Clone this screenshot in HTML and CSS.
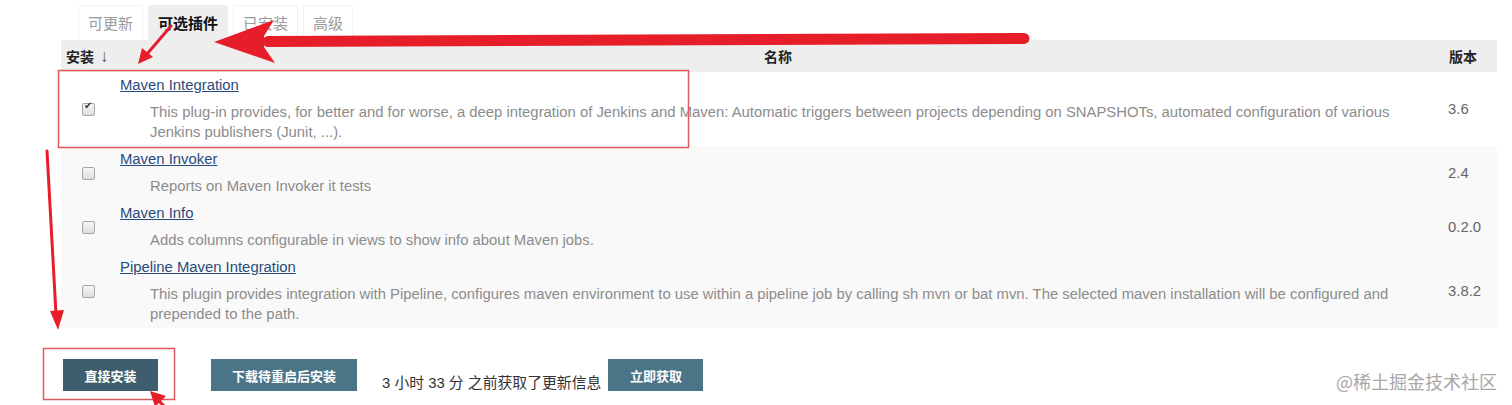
FILE: index.html
```html
<!DOCTYPE html>
<html>
  <head>
    <title>插件管理</title>
    <meta charset="UTF-8">
    <meta name="viewport" content="width=device-width, initial-scale=1.0">

  <!--CSS-->
    <link rel="stylesheet" href="styles.css">
  </head>

<!--BODY-->
<body>

  <!--Tabs-->
  <div class="tabs">
    <div class="tab">可更新</div>
    <div class="tab active">可选插件</div>
    <div class="tab">已安装</div>
    <div class="tab">高级</div>
  </div>

  <!--The plugin table-->
  <table id="plugins">
    <colgroup>
      <col class="c-install">
      <col>
      <col class="c-version">
    </colgroup>
    <thead>
      <tr>
        <th class="col-install">安装 <span class="sort">↓</span></th>
        <th class="col-name">名称</th>
        <th class="col-version">版本</th>
      </tr>
    </thead>
    <tbody>
      <tr class="plain">
        <td class="col-install"><input type="checkbox" checked></td>
        <td class="col-name">
          <a href="#">Maven Integration</a>
          <div class="desc">This plug-in provides, for better and for worse, a deep integration of Jenkins and Maven: Automatic triggers between projects depending on SNAPSHOTs, automated configuration of various Jenkins publishers (Junit, ...).</div>
        </td>
        <td class="col-version">3.6</td>
      </tr>
      <tr>
        <td class="col-install"><input type="checkbox"></td>
        <td class="col-name">
          <a href="#">Maven Invoker</a>
          <div class="desc">Reports on Maven Invoker it tests</div>
        </td>
        <td class="col-version">2.4</td>
      </tr>
      <tr>
        <td class="col-install"><input type="checkbox"></td>
        <td class="col-name">
          <a href="#">Maven Info</a>
          <div class="desc">Adds columns configurable in views to show info about Maven jobs.</div>
        </td>
        <td class="col-version">0.2.0</td>
      </tr>
      <tr>
        <td class="col-install"><input type="checkbox"></td>
        <td class="col-name">
          <a href="#">Pipeline Maven Integration</a>
          <div class="desc">This plugin provides integration with Pipeline, configures maven environment to use within a pipeline job by calling sh mvn or bat mvn. The selected maven installation will be configured and prepended to the path.</div>
        </td>
        <td class="col-version">3.8.2</td>
      </tr>
    </tbody>
  </table>

  <!--Actions-->
  <div class="actions">
    <button class="btn dark">直接安装</button>
    <button class="btn wide">下载待重启后安装</button>
    <span class="info">3 小时 33 分 之前获取了更新信息</span>
    <button class="btn">立即获取</button>
  </div>

  <div class="watermark">@稀土掘金技术社区</div>

  <!--Annotations-->
  <svg class="marks" width="1512" height="405" viewBox="0 0 1512 405">
    <rect x="58.5" y="70.5" width="630" height="77" fill="none" stroke="#e0575d" stroke-width="1.5"/>
    <rect x="43.5" y="348.5" width="131" height="51" fill="none" stroke="#e0575d" stroke-width="1.5"/>
    <line x1="1024" y1="38.5" x2="268" y2="41.5" stroke="#e61e29" stroke-width="11" stroke-linecap="round"/>
    <polygon points="214,42 274,20 264,36 264,47 275,63" fill="#e61e29"/>
    <line x1="171" y1="26" x2="147" y2="54" stroke="#e61e29" stroke-width="3" stroke-linecap="round"/>
    <polygon points="138,64 142,48 153,57" fill="#e61e29"/>
    <line x1="47" y1="151" x2="56" y2="314" stroke="#e61e29" stroke-width="3" stroke-linecap="round"/>
    <polygon points="58,330 50,311 64,310" fill="#e61e29"/>
    <line x1="156" y1="398" x2="168" y2="410" stroke="#e61e29" stroke-width="3"/>
    <polygon points="150,391 166,396 155,407" fill="#e61e29"/>
  </svg>

</body>
</html>
```

FILE: styles.css
```css
html, body {
  margin: 0;
  padding: 0;
  background-color: #fff;
  font-family: "Liberation Sans", Arial, "Noto Sans CJK SC", sans-serif;
  font-size: 14.85px;
  color: #333;
}

body {
  position: relative;
  width: 1512px;
  height: 405px;
  overflow: hidden;
}

/**Tabs*/
.tabs {
  display: flex;
  gap: 5px;
  margin-left: 78px;
  padding-top: 5px;
}

.tab {
  height: 35px;
  line-height: 35px;
  padding: 0 9px;
  font-size: 15px;
  color: #9a9a9a;
  border: 1px solid #f2f2f2;
  border-bottom: none;
  border-radius: 4px 4px 0 0;
  box-sizing: border-box;
}

.tab.active {
  background-color: #eee;
  border-color: #eee;
  color: #111;
  font-weight: bold;
}

/**Table*/
#plugins {
  margin-left: 61px;
  width: 1436px;
  border-collapse: collapse;
  table-layout: fixed;
}

.c-install {
  width: 55px;
}

.c-version {
  width: 57px;
}

#plugins th {
  background-color: #eee;
  height: 32px;
  padding: 0;
  font-size: 14px;
  color: #222;
}

#plugins th.col-install {
  text-align: left;
  padding-left: 5px;
}

#plugins th .sort {
  font-weight: normal;
  font-size: 17px;
  color: #555;
  margin-left: 2px;
}

#plugins th.col-name {
  text-align: center;
}

#plugins th.col-version {
  text-align: left;
  padding-left: 9px;
}

#plugins tbody tr {
  background-color: #f9f9f9;
}

#plugins tbody tr.plain {
  background-color: #fff;
}

#plugins td {
  padding: 3px 0 4px 0;
  line-height: 20px;
  vertical-align: middle;
}

#plugins td.col-install {
  text-align: center;
}

/**Old style grey checkbox*/
#plugins td.col-install input {
  appearance: none;
  -webkit-appearance: none;
  position: relative;
  margin: 0;
  width: 13px;
  height: 13px;
  border: 1px solid #a6a6a6;
  border-radius: 2px;
  background: linear-gradient(#f6f6f6, #dedede);
  vertical-align: middle;
}

#plugins td.col-install input:checked::after {
  content: "✔";
  position: absolute;
  left: 1px;
  top: -4px;
  font-size: 10px;
  color: #333;
}

#plugins td.col-name {
  padding-left: 4px;
  padding-right: 10px;
}

#plugins td.col-version {
  padding-left: 8px;
  color: #666;
}

#plugins a {
  color: #2a4a7c;
  text-decoration: underline;
}

.desc {
  margin-top: 7px;
  padding-left: 30px;
  color: #8c8c8c;
}

/**Bottom actions*/
.actions {
  display: flex;
  align-items: flex-end;
  margin: 31px 0 0 63px;
}

.btn {
  height: 32px;
  width: 95px;
  border: none;
  padding: 0;
  background-color: #4b7587;
  color: #fff;
  font-family: "Liberation Sans", "Noto Sans CJK SC", sans-serif;
  font-size: 13px;
  font-weight: bold;
  cursor: pointer;
}

.btn.dark {
  background-color: #3d5e6d;
}

.btn.wide {
  width: 146px;
  margin-left: 53px;
}

.info {
  margin: 0 7px -2px 25px;
  line-height: 20px;
  font-size: 14.85px;
  color: #333;
}

.watermark {
  position: absolute;
  right: 15px;
  bottom: 13px;
  font-family: "Noto Sans CJK SC", sans-serif;
  font-size: 18px;
  line-height: 22px;
  color: #a8a8a8;
}

/**Annotation layer*/
.marks {
  position: absolute;
  left: 0;
  top: 0;
  pointer-events: none;
}
```
